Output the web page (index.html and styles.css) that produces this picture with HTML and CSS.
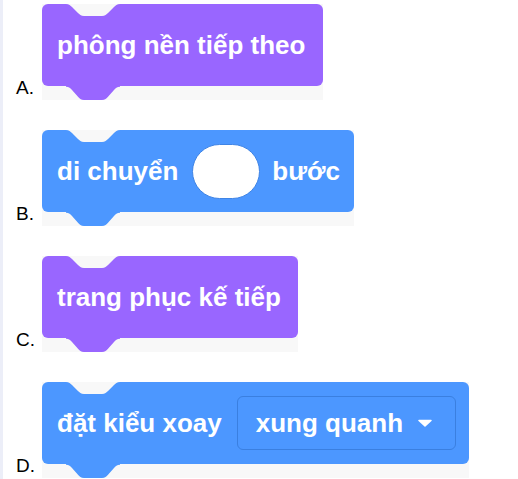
FILE: index.html
```html
<!DOCTYPE html>
<html lang="vi">
<head>
<meta charset="utf-8">
<title>Khối lệnh</title>
<link rel="stylesheet" href="styles.css">
</head>
<body>
<div class="list">
  <div class="row">
    <span class="label">A.</span>
    <div class="stack">
      <div class="block looks w-a">
        <span class="text">phông nền tiếp theo</span>
        <svg class="notch" viewBox="0 0 36 8" preserveAspectRatio="none"><path d="M0 0 C2 0 3 1 4 2 L8 6 C9 7 10 8 12 8 H24 C26 8 27 7 28 6 L32 2 C33 1 34 0 36 0 Z"/></svg>
        <svg class="bump" viewBox="0 -1 36 9" preserveAspectRatio="none"><path d="M0 -1 V0 C2 0 3 1 4 2 L8 6 C9 7 10 8 12 8 H24 C26 8 27 7 28 6 L32 2 C33 1 34 0 36 0 V-1 Z"/></svg>
      </div>
    </div>
  </div>
  <div class="row">
    <span class="label">B.</span>
    <div class="stack">
      <div class="block motion w-b">
        <span class="text">di chuyển</span>
        <span class="oval"></span>
        <span class="text">bước</span>
        <svg class="notch" viewBox="0 0 36 8" preserveAspectRatio="none"><path d="M0 0 C2 0 3 1 4 2 L8 6 C9 7 10 8 12 8 H24 C26 8 27 7 28 6 L32 2 C33 1 34 0 36 0 Z"/></svg>
        <svg class="bump" viewBox="0 -1 36 9" preserveAspectRatio="none"><path d="M0 -1 V0 C2 0 3 1 4 2 L8 6 C9 7 10 8 12 8 H24 C26 8 27 7 28 6 L32 2 C33 1 34 0 36 0 V-1 Z"/></svg>
      </div>
    </div>
  </div>
  <div class="row">
    <span class="label">C.</span>
    <div class="stack">
      <div class="block looks w-c">
        <span class="text">trang phục kế tiếp</span>
        <svg class="notch" viewBox="0 0 36 8" preserveAspectRatio="none"><path d="M0 0 C2 0 3 1 4 2 L8 6 C9 7 10 8 12 8 H24 C26 8 27 7 28 6 L32 2 C33 1 34 0 36 0 Z"/></svg>
        <svg class="bump" viewBox="0 -1 36 9" preserveAspectRatio="none"><path d="M0 -1 V0 C2 0 3 1 4 2 L8 6 C9 7 10 8 12 8 H24 C26 8 27 7 28 6 L32 2 C33 1 34 0 36 0 V-1 Z"/></svg>
      </div>
    </div>
  </div>
  <div class="row">
    <span class="label">D.</span>
    <div class="stack">
      <div class="block motion w-d">
        <span class="text">đặt kiểu xoay</span>
        <span class="dropdown">
          <span class="text">xung quanh</span>
          <svg class="caret" viewBox="0 0 16 8"><path d="M2 1.5 H14 L8 7 Z"/></svg>
        </span>
        <svg class="notch" viewBox="0 0 36 8" preserveAspectRatio="none"><path d="M0 0 C2 0 3 1 4 2 L8 6 C9 7 10 8 12 8 H24 C26 8 27 7 28 6 L32 2 C33 1 34 0 36 0 Z"/></svg>
        <svg class="bump" viewBox="0 -1 36 9" preserveAspectRatio="none"><path d="M0 -1 V0 C2 0 3 1 4 2 L8 6 C9 7 10 8 12 8 H24 C26 8 27 7 28 6 L32 2 C33 1 34 0 36 0 V-1 Z"/></svg>
      </div>
    </div>
  </div>
</div>
</body>
</html>
```
FILE: styles.css
```css
* { box-sizing: border-box; }
html, body { margin: 0; padding: 0; background: #ffffff; }
body {
  width: 518px;
  height: 479px;
  border-left: 3px solid #eceef8;
  font-family: "Liberation Sans", Arial, sans-serif;
  overflow: hidden;
}
.list {
  display: flex;
  flex-direction: column;
  gap: 30px;
  padding-top: 4px;
}
.row {
  display: flex;
  align-items: flex-end;
}
.label {
  width: 26px;
  margin-left: 13px;
  margin-bottom: 3px;
  font-size: 19px;
  line-height: 19px;
  color: #000;
}
.stack {
  background: #f8f8f8;
  padding-bottom: 14px;
}
.block {
  position: relative;
  height: 82px;
  border-radius: 6px;
  display: flex;
  align-items: center;
  padding-left: 15px;
  color: #fff;
}
.looks { background: #9966ff; fill: #9966ff; }
.motion { background: #4c97ff; fill: #4c97ff; }
.w-a { width: 281px; }
.w-b { width: 312px; }
.w-c { width: 256px; }
.w-d { width: 427px; }
.text {
  font-size: 26px;
  font-weight: bold;
  line-height: 30px;
  white-space: nowrap;
}
.notch {
  position: absolute;
  top: 0;
  left: 24px;
  width: 54px;
  height: 12px;
  fill: #f8f8f8;
}
.bump {
  position: absolute;
  top: calc(100% - 1px);
  left: 24px;
  width: 54px;
  height: 15px;
}
.oval {
  width: 68px;
  height: 55px;
  margin: 0 12px 0 14px;
  background: #fff;
  border: 1px solid #3f84e5;
  border-radius: 28px;
}
.dropdown {
  display: flex;
  align-items: center;
  width: 219px;
  height: 54px;
  margin-left: 15px;
  padding-left: 18px;
  border: 1px solid #3a7fe0;
  border-radius: 6px;
  background: #4c97ff;
}
.caret {
  width: 16px;
  height: 8px;
  margin-left: 14px;
  fill: #fff;
  stroke: #fff;
  stroke-width: 1.5;
  stroke-linejoin: round;
}
```
